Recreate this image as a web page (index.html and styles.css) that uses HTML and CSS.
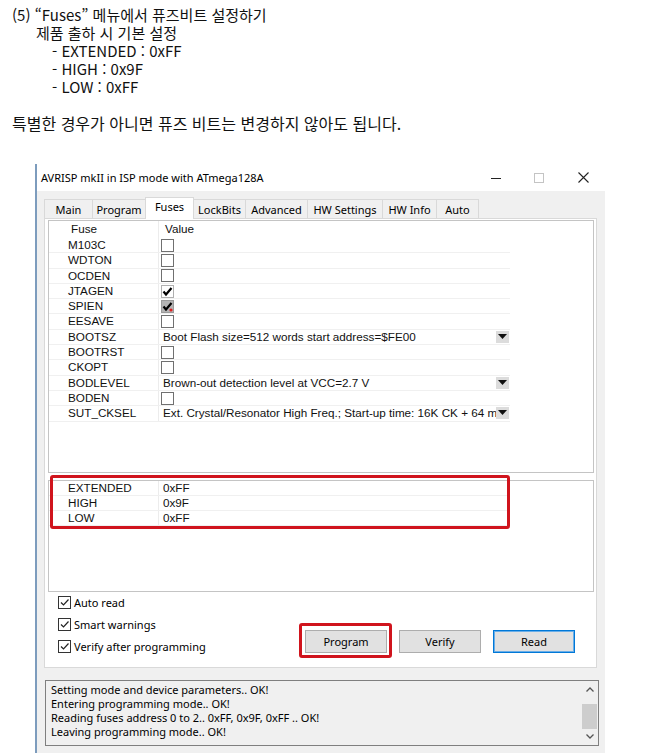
FILE: index.html
```html
<!DOCTYPE html>
<html lang="ko">
<head>
<meta charset="utf-8">
<title>Fuses</title>
<link rel="stylesheet" href="styles.css">
</head>
<body>
<div class="doc">
  <p>(5) “Fuses” 메뉴에서 퓨즈비트 설정하기</p>
  <p class="sub">제품 출하 시 기본 설정</p>
  <p class="item">- EXTENDED : 0xFF</p>
  <p class="item">- HIGH : 0x9F</p>
  <p class="item">- LOW : 0xFF</p>
  <p class="note">특별한 경우가 아니면 퓨즈 비트는 변경하지 않아도 됩니다.</p>
</div>

<div class="window">
  <div class="titlebar">
    <span class="title">AVRISP mkII in ISP mode with ATmega128A</span>
    <div class="controls">
      <span class="ctl ctl-min"><svg width="10" height="10" viewBox="0 0 10 10"><line x1="0" y1="5.5" x2="10" y2="5.5" stroke="#222" stroke-width="1"/></svg></span>
      <span class="ctl ctl-max"><svg width="10" height="10" viewBox="0 0 10 10"><rect x="0.5" y="0.5" width="9" height="9" fill="none" stroke="#c4c4c4" stroke-width="1"/></svg></span>
      <span class="ctl ctl-close"><svg width="11" height="11" viewBox="0 0 11 11"><path d="M0.5 0.5 L10.5 10.5 M10.5 0.5 L0.5 10.5" stroke="#222" stroke-width="1.1"/></svg></span>
    </div>
  </div>

  <div class="body">
    <div class="tabs">
      <span class="tab t-main">Main</span>
      <span class="tab t-program">Program</span>
      <span class="tab t-fuses active">Fuses</span>
      <span class="tab t-lock">LockBits</span>
      <span class="tab t-adv">Advanced</span>
      <span class="tab t-hws">HW Settings</span>
      <span class="tab t-hwi">HW Info</span>
      <span class="tab t-auto">Auto</span>
    </div>

    <div class="page">
      <div class="grid fuses">
        <div class="row head"><span class="name">Fuse</span><span class="val">Value</span></div>
        <div class="row"><span class="name">M103C</span><span class="val"><span class="cb"></span></span></div>
        <div class="row"><span class="name">WDTON</span><span class="val"><span class="cb"></span></span></div>
        <div class="row"><span class="name">OCDEN</span><span class="val"><span class="cb"></span></span></div>
        <div class="row"><span class="name">JTAGEN</span><span class="val"><span class="cb on"><svg width="11" height="11" viewBox="0 0 11 11"><path d="M1.5 5.5 L4 8.5 L9.5 2" fill="none" stroke="#000" stroke-width="2.2"/></svg></span></span></div>
        <div class="row"><span class="name">SPIEN</span><span class="val"><span class="cb locked"><svg width="11" height="11" viewBox="0 0 11 11"><path d="M1.5 5.5 L4 8.5 L9.5 2" fill="none" stroke="#000" stroke-width="2.2"/><circle cx="9" cy="9" r="1.6" fill="#e02020"/></svg></span></span></div>
        <div class="row"><span class="name">EESAVE</span><span class="val"><span class="cb"></span></span></div>
        <div class="row"><span class="name">BOOTSZ</span><span class="val"><span class="txt">Boot Flash size=512 words start address=$FE00</span><span class="dd"><svg width="9" height="6" viewBox="0 0 9 6"><path d="M0 0 H9 L4.5 5 Z" fill="#111"/></svg></span></span></div>
        <div class="row"><span class="name">BOOTRST</span><span class="val"><span class="cb"></span></span></div>
        <div class="row"><span class="name">CKOPT</span><span class="val"><span class="cb"></span></span></div>
        <div class="row"><span class="name">BODLEVEL</span><span class="val"><span class="txt">Brown-out detection level at VCC=2.7 V</span><span class="dd"><svg width="9" height="6" viewBox="0 0 9 6"><path d="M0 0 H9 L4.5 5 Z" fill="#111"/></svg></span></span></div>
        <div class="row"><span class="name">BODEN</span><span class="val"><span class="cb"></span></span></div>
        <div class="row"><span class="name">SUT_CKSEL</span><span class="val"><span class="txt">Ext. Crystal/Resonator High Freq.; Start-up time: 16K CK + 64 ms</span><span class="dd"><svg width="9" height="6" viewBox="0 0 9 6"><path d="M0 0 H9 L4.5 5 Z" fill="#111"/></svg></span></span></div>
      </div>

      <div class="grid regs">
        <div class="row"><span class="name">EXTENDED</span><span class="val">0xFF</span></div>
        <div class="row"><span class="name">HIGH</span><span class="val">0x9F</span></div>
        <div class="row"><span class="name">LOW</span><span class="val">0xFF</span></div>
      </div>

      <div class="bottom">
        <div class="checks">
          <div class="chk"><span class="box"><svg width="11" height="11" viewBox="0 0 11 11"><path d="M2 5.5 L4.5 8 L9.5 2.5" fill="none" stroke="#222" stroke-width="1.2"/></svg></span>Auto read</div>
          <div class="chk"><span class="box"><svg width="11" height="11" viewBox="0 0 11 11"><path d="M2 5.5 L4.5 8 L9.5 2.5" fill="none" stroke="#222" stroke-width="1.2"/></svg></span>Smart warnings</div>
          <div class="chk"><span class="box"><svg width="11" height="11" viewBox="0 0 11 11"><path d="M2 5.5 L4.5 8 L9.5 2.5" fill="none" stroke="#222" stroke-width="1.2"/></svg></span>Verify after programming</div>
        </div>
        <div class="buttons">
          <span class="btn">Program</span>
          <span class="btn">Verify</span>
          <span class="btn default">Read</span>
        </div>
      </div>

      <div class="mark mark-regs"></div>
      <div class="mark mark-prog"></div>
    </div>

    <div class="log">
      <div class="log-text">
        <div>Setting mode and device parameters.. OK!</div>
        <div>Entering programming mode.. OK!</div>
        <div>Reading fuses address 0 to 2.. 0xFF, 0x9F, 0xFF .. OK!</div>
        <div>Leaving programming mode.. OK!</div>
      </div>
      <div class="scroll">
        <span class="arrow"><svg width="8" height="5" viewBox="0 0 8 5"><path d="M0.5 4.5 L4 1 L7.5 4.5" fill="none" stroke="#555" stroke-width="1.3"/></svg></span>
        <span class="track"><span class="thumb"></span></span>
        <span class="arrow"><svg width="8" height="5" viewBox="0 0 8 5"><path d="M0.5 0.5 L4 4 L7.5 0.5" fill="none" stroke="#555" stroke-width="1.3"/></svg></span>
      </div>
    </div>
  </div>
</div>
</body>
</html>
```

FILE: styles.css
```css
* { box-sizing: border-box; }
html, body { margin: 0; padding: 0; background: #fff; }
body {
  width: 645px;
  height: 753px;
  overflow: hidden;
  font-family: "Noto Sans", "Liberation Sans", sans-serif;
  color: #000;
}

/* document text */
.doc {
  padding: 6px 0 0 12px;
  font-family: "Noto Sans CJK KR", "Noto Sans", sans-serif;
  font-size: 15px;
  line-height: 18px;
  color: #111;
}
.doc p { margin: 0; white-space: nowrap; }
.doc .sub { padding-left: 24px; }
.doc .item { padding-left: 40px; }
.doc .note { margin-top: 18px; font-size: 16px; }

/* window */
.window {
  margin: 32px 0 0 35px;
  width: 570px;
  border-left: 2px solid #7d9cbd;
}
.titlebar {
  height: 27px;
  display: flex;
  align-items: center;
  background: #fff;
  padding-left: 4px;
  font-size: 11px;
}
.title { white-space: nowrap; }
.controls { margin-left: auto; display: flex; height: 100%; }
.ctl { display: flex; align-items: center; justify-content: center; height: 100%; }
.ctl-min { width: 42px; }
.ctl-max { width: 44px; }
.ctl-close { width: 44px; }

.body {
  background: #f0f0f0;
  padding: 6px 8px 0 7px;
  height: 562px;
}

/* tabs */
.tabs {
  display: flex;
  align-items: flex-end;
  height: 21px;
  position: relative;
  z-index: 2;
  font-size: 11px;
}
.tab {
  height: 19px;
  margin-left: -1px;
  border: 1px solid #d9d9d9;
  border-bottom: none;
  background: #f0f0f0;
  display: flex;
  align-items: center;
  justify-content: center;
  white-space: nowrap;
  padding-top: 1px;
}
.tab.t-main { margin-left: 0; }
.tab.active {
  height: 22px;
  margin-bottom: -1px;
  background: #fff;
  align-items: flex-start;
  padding-top: 1px;
  position: relative;
  z-index: 3;
}
.t-main { width: 49px; }
.t-program { width: 54px; }
.t-fuses { width: 49px; }
.t-lock { width: 53px; }
.t-adv { width: 63px; }
.t-hws { width: 76px; }
.t-hwi { width: 55px; }
.t-auto { width: 43px; }

/* tab page */
.page {
  position: relative;
  height: 450px;
  border: 1px solid #d9d9d9;
  background: #fff;
  padding: 1px 2px 0 3px;
}

.grid {
  border: 1px solid #c4c4c4;
  background: #fff;
  font-family: "Liberation Sans", "Noto Sans", sans-serif;
  font-size: 11.7px;
  color: #111;
}
.grid.fuses { height: 253px; }
.grid.regs { height: 112px; margin-top: 7px; }

.row {
  display: flex;
  width: 461px;
  height: 15.3px;
  align-items: stretch;
  border-bottom: 1px solid #f0f0f0;
  line-height: 14px;
}
.regs .row { height: 15px; }
.row.head { height: 17px; border-bottom: none; line-height: 16px; }
.name {
  width: 109px;
  padding-left: 19px;
  white-space: nowrap;
}
.head .name { padding-left: 22px; }
.val {
  flex: 1;
  min-width: 0;
  border-left: 1px solid #ececec;
  padding-left: 2px;
  display: flex;
  align-items: center;
  white-space: nowrap;
}
.regs .val { padding-left: 4px; }
.head .val { padding-left: 6px; align-items: flex-start; }
.txt {
  flex: 1;
  min-width: 0;
  overflow: hidden;
  padding-left: 2px;
}
.dd {
  width: 13px;
  height: 12px;
  margin-right: 1px;
  background: #dcdcdc;
  display: flex;
  align-items: center;
  justify-content: center;
}
.cb {
  width: 13px;
  height: 13px;
  border: 1px solid #707070;
  background: #fff;
  display: flex;
  align-items: center;
  justify-content: center;
}
.cb.on { border-color: #b0b0b0; }
.cb.locked { background: #b4b4b4; border-color: #9a9a9a; }

/* bottom controls */
.bottom {
  display: flex;
  height: 74px;
  font-size: 11px;
}
.checks {
  padding-left: 10px;
  margin-top: -1px;
}
.chk {
  height: 22px;
  display: flex;
  align-items: center;
  white-space: nowrap;
}
.box {
  width: 13px;
  height: 13px;
  border: 1px solid #333;
  background: #fff;
  margin-right: 3px;
  display: flex;
  align-items: center;
  justify-content: center;
}
.buttons {
  margin-left: auto;
  margin-right: 19px;
  margin-top: 38px;
  display: flex;
  gap: 12px;
  align-self: flex-start;
}
.btn {
  width: 82px;
  height: 23px;
  background: #e1e1e1;
  border: 1px solid #adadad;
  display: flex;
  align-items: center;
  justify-content: center;
}
.btn.default {
  border: 1px solid #0078d7;
  box-shadow: inset 0 0 0 1px #6aaee8;
}

/* red annotation boxes */
.mark {
  position: absolute;
  border: 3px solid #d0141d;
  border-radius: 3px;
}
.mark-regs { left: 5px; top: 256px; width: 460px; height: 54px; }
.mark-prog { left: 254px; top: 404px; width: 93px; height: 35px; }

/* log */
.log {
  margin-top: 12px;
  margin-left: 1px;
  width: 554px;
  height: 66px;
  border: 1px solid #7f7f7f;
  background: #f0f0f0;
  display: flex;
  font-size: 11px;
}
.log-text {
  flex: 1;
  padding: 2px 0 0 5px;
  line-height: 14px;
  white-space: nowrap;
}
.scroll {
  width: 17px;
  display: flex;
  flex-direction: column;
}
.arrow {
  height: 17px;
  display: flex;
  align-items: center;
  justify-content: center;
}
.track { flex: 1; padding-top: 6px; }
.thumb { display: block; height: 25px; margin: 0 1px; background: #cdcdcd; }
```
